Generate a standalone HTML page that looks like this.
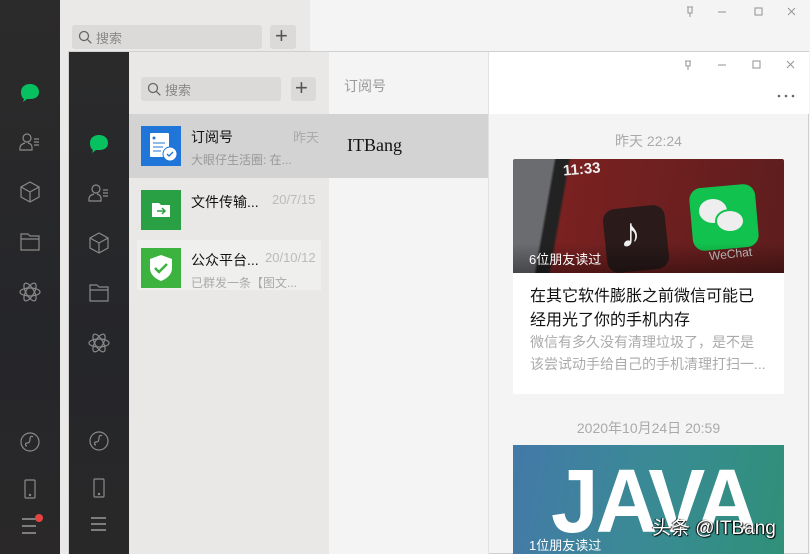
<!DOCTYPE html>
<html><head><meta charset="utf-8"><style>
*{margin:0;padding:0;box-sizing:border-box}
body{width:810px;height:554px;overflow:hidden;position:relative;background:#f4f4f4;font-family:"Liberation Sans","Noto Sans CJK SC",sans-serif}
.a{position:absolute}
.t{white-space:nowrap}
</style></head><body>
<!-- back window -->
<div class="a" style="left:0;top:0;width:60px;height:554px;background:linear-gradient(#2c2b2b,#25262a 60%,#2a2828)"></div>
<div class="a" style="left:60px;top:0;width:250px;height:554px;background:#ebe9e8"></div>
<div class="a" style="left:310px;top:0;width:500px;height:52px;background:#f4f4f4"></div>
<div class="a" style="left:72px;top:25px;width:190px;height:24px;background:#dcdad9;border-radius:3px"></div>
<div class="a t" style="left:96px;top:28px;font-size:13px;color:#888">搜索</div>
<div class="a" style="left:270px;top:25px;width:26px;height:24px;background:#dcdad9;border-radius:3px"></div>
<div class="a t" style="left:275px;top:23px;font-size:22px;color:#555;font-weight:300">+</div>

<svg class="a" style="left:0;top:0" width="810" height="554">
<defs>
<g id="ic" fill="none" stroke="#8a8a8a" stroke-width="1.2">
 <path d="M-9 0c0-5 4-8 9-8s9 3 9 8-4 7-9 7c-1 0-2 0-3 0l-4 3 1-3c-2-1-3-4-3-7z" fill="#07c160" stroke="none"/>
 <g transform="translate(0,50)"><circle cx="-3" cy="-4" r="4"/><path d="M-2 1c3 1 4 2 4 5v2h-12v-2c0-3 2-4 5-5M4 -3h5M4 0h5M4 3h5"/></g>
 <g transform="translate(0,100)"><path d="M0 -10l9 5v10l-9 5-9-5v-10z M-9 -5l9 5 9-5 M0 0v10"/></g>
 <g transform="translate(0,150)"><path d="M-9 -8h7l2 2h9v14h-18z M-9 -3h18"/></g>
 <g transform="translate(0,200)"><ellipse cx="0" cy="0" rx="10" ry="4"/><ellipse cx="0" cy="0" rx="10" ry="4" transform="rotate(60)"/><ellipse cx="0" cy="0" rx="10" ry="4" transform="rotate(-60)"/></g>
</g>
<g id="ib" fill="none" stroke="#8a8a8a" stroke-width="1.2">
 <circle cx="0" cy="0" r="9"/><path d="M-3 4c-2 0-2-3 0-3s3-1 3-4 2-3 3-2"/>
 <rect x="-5" y="38" width="10" height="18" rx="1"/><circle cx="0" cy="53" r=".6"/>
</g>
<g id="mg" fill="none" stroke="#666" stroke-width="1.3"><circle cx="0" cy="0" r="4.5"/><path d="M3.3 3.3l4 4"/></g>
</defs>
<use href="#mg" x="84" y="36"/>
<use href="#ic" x="30" y="92"/>
<use href="#ib" x="30" y="442"/>
<g stroke="#9a9a9a" stroke-width="1.5"><path d="M22 519h14M22 526h14M22 533h14"/></g>
<circle cx="39" cy="518" r="4" fill="#e64340"/>
<g fill="none" stroke="#9a9a9a" stroke-width="1.1">
<path d="M687 7h6M688 7v6h4v-6M690 13v4"/><path d="M718 12h8"/><rect x="755" y="8" width="7" height="7"/><path d="M788 8l7 7M795 8l-7 7"/>
</g>
</svg>

<!-- front window -->
<div class="a" style="left:68px;top:51px;width:741px;height:503px;border:1px solid #cfcfcf;background:#f4f4f4"></div>
<div class="a" style="left:69px;top:52px;width:60px;height:502px;background:linear-gradient(#2a2a2b,#25262a 60%,#292828)"></div>
<div class="a" style="left:129px;top:52px;width:200px;height:502px;background:#e9e8e7"></div>
<div class="a" style="left:329px;top:52px;width:159px;height:502px;background:#f4f4f4"></div>
<div class="a" style="left:488px;top:52px;width:321px;height:62px;background:#fff;border-left:1px solid #e2e2e2"></div>
<div class="a" style="left:488px;top:114px;width:1px;height:440px;background:#e2e2e2"></div>
<div class="a" style="left:141px;top:77px;width:140px;height:24px;background:#dcdad9;border-radius:3px"></div>
<div class="a t" style="left:165px;top:80px;font-size:13px;color:#888">搜索</div>
<div class="a" style="left:291px;top:77px;width:25px;height:24px;background:#dcdad9;border-radius:3px"></div>
<div class="a t" style="left:295px;top:75px;font-size:22px;color:#555;font-weight:300">+</div>
<div class="a t" style="left:344px;top:76px;font-size:14px;color:#999">订阅号</div>
<div class="a" style="left:129px;top:114px;width:359px;height:64px;background:#d3d3d3"></div>
<div class="a t" style="left:347px;top:135px;font-size:18px;font-family:'Liberation Serif',serif;color:#111">ITBang</div>
<div class="a" style="left:137px;top:240px;width:184px;height:50px;background:#efefee"></div>

<div class="a" style="left:141px;top:126px;width:40px;height:40px;background:#1f76d8"></div>
<svg class="a" style="left:141px;top:126px" width="40" height="40"><rect x="9" y="7" width="19" height="24" rx="1" fill="#fff"/><circle cx="13" cy="12" r="1.5" fill="#1f76d8"/><path d="M12 17h12M12 21h10M12 25h8" stroke="#1f76d8"/><circle cx="29" cy="28" r="7" fill="#fff" stroke="#1f76d8"/><path d="M26 28l2 2 4-4" stroke="#1f76d8" fill="none" stroke-width="1.3"/></svg>
<div class="a t" style="left:191px;top:127px;font-size:14px;color:#111">订阅号</div>
<div class="a t" style="left:293px;top:127px;font-size:13px;color:#aaa">昨天</div>
<div class="a t" style="left:191px;top:151px;font-size:12px;color:#999">大眼仔生活圈: 在...</div>

<div class="a" style="left:141px;top:190px;width:40px;height:40px;background:#2aa044"></div>
<svg class="a" style="left:141px;top:190px" width="40" height="40"><path d="M11 13h7l2 2h9v12h-18z" fill="#fff"/><path d="M16 21h7M21 18l3 3-3 3" stroke="#2aa044" fill="none" stroke-width="1.5"/></svg>
<div class="a t" style="left:191px;top:192px;font-size:14px;color:#111">文件传输...</div>
<div class="a t" style="left:272px;top:192px;font-size:13px;color:#bbb">20/7/15</div>

<div class="a" style="left:141px;top:248px;width:40px;height:40px;background:#3cb33e"></div>
<svg class="a" style="left:141px;top:248px" width="40" height="40"><path d="M20 7l11 4v9c0 7-6 11-11 13-5-2-11-6-11-13v-9z" fill="#fff"/><path d="M14 20l4 4 8-8" stroke="#3cb33e" fill="none" stroke-width="2.5"/></svg>
<div class="a t" style="left:191px;top:250px;font-size:14px;color:#111">公众平台...</div>
<div class="a t" style="left:265px;top:250px;font-size:13px;color:#bbb">20/10/12</div>
<div class="a t" style="left:191px;top:274px;font-size:12px;color:#aaa">已群发一条【图文...</div>

<svg class="a" style="left:0;top:0" width="810" height="554">
<use href="#mg" x="153" y="88"/>
<use href="#ic" x="99" y="143"/>
<use href="#ib" x="99" y="441"/>
<g stroke="#9a9a9a" stroke-width="1.5"><path d="M91 518h15M91 524h15M91 530h15"/></g>
<g fill="none" stroke="#9a9a9a" stroke-width="1.1">
<path d="M685 61h6M686 61v5h4v-5M688 66v4"/><path d="M718 65h8"/><rect x="753" y="61" width="7" height="7"/><path d="M787 61l7 7M794 61l-7 7"/>
</g>
<g fill="#666"><circle cx="779" cy="96" r="1.3"/><circle cx="786" cy="96" r="1.3"/><circle cx="793" cy="96" r="1.3"/></g>
</svg>

<div class="a t" style="left:488px;top:131px;width:321px;text-align:center;font-size:14px;color:#aaa">昨天 22:24</div>
<div class="a" style="left:513px;top:159px;width:271px;height:235px;background:#fff;border-radius:2px;overflow:hidden">
 <div style="height:114px;background:linear-gradient(100deg,#6b6c70 0,#6b6c70 14%,#222 15%,#222 19%,#7a2121 20%,#5e1d1d 100%);position:relative;overflow:hidden">
  <div class="a t" style="left:50px;top:2px;font-size:15px;color:#eee;font-weight:bold;transform:rotate(-5deg)">11:33</div>
  <div class="a" style="left:92px;top:48px;width:62px;height:64px;background:#2a1a1a;border-radius:12px;transform:rotate(-6deg)"></div>
  <div class="a t" style="left:107px;top:50px;font-size:42px;color:#f0f0f0;font-weight:bold">♪</div>
  <div class="a" style="left:178px;top:27px;width:66px;height:63px;background:#12c24e;border-radius:12px;transform:rotate(-5deg)"></div>
  <div class="a" style="left:186px;top:40px;width:28px;height:24px;background:#eee;border-radius:50%"></div>
  <div class="a" style="left:202px;top:50px;width:30px;height:24px;background:#eee;border-radius:50%;border:2px solid #12c24e"></div>
  <div class="a t" style="left:196px;top:88px;font-size:12px;color:#ccc;transform:rotate(-6deg)">WeChat</div>
  <div class="a" style="left:0;bottom:0;width:100%;height:30px;background:linear-gradient(transparent,rgba(0,0,0,.35))"></div>
  <div class="a t" style="left:16px;top:90px;font-size:13px;color:#fff">6位朋友读过</div>
 </div>
 <div class="a" style="left:17px;top:126px;font-size:16px;line-height:24px;color:#111;width:228px">在其它软件膨胀之前微信可能已经用光了你的手机内存</div>
 <div class="a" style="left:17px;top:172px;font-size:14px;line-height:22px;color:#aaa;width:236px">微信有多久没有清理垃圾了，是不是该尝试动手给自己的手机清理打扫一...</div>
</div>
<div class="a t" style="left:488px;top:418px;width:321px;text-align:center;font-size:14px;color:#aaa">2020年10月24日 20:59</div>
<div class="a" style="left:513px;top:445px;width:271px;height:109px;background:linear-gradient(100deg,#4379a8,#3a8a95 50%,#2f9078);overflow:hidden">
 <div class="a t" style="left:38px;top:12px;font-size:90px;line-height:90px;font-weight:bold;color:#fff;letter-spacing:-3px;transform:scaleX(0.95);transform-origin:left">JAVA</div>
 <div class="a t" style="left:16px;top:90px;font-size:13px;color:#fff">1位朋友读过</div>
</div>
<div class="a t" style="left:652px;top:513px;font-size:19px;color:#fff;text-shadow:1px 1px 1px #000,-1px 0 1px #000">头条 @ITBang</div>
</body></html>
